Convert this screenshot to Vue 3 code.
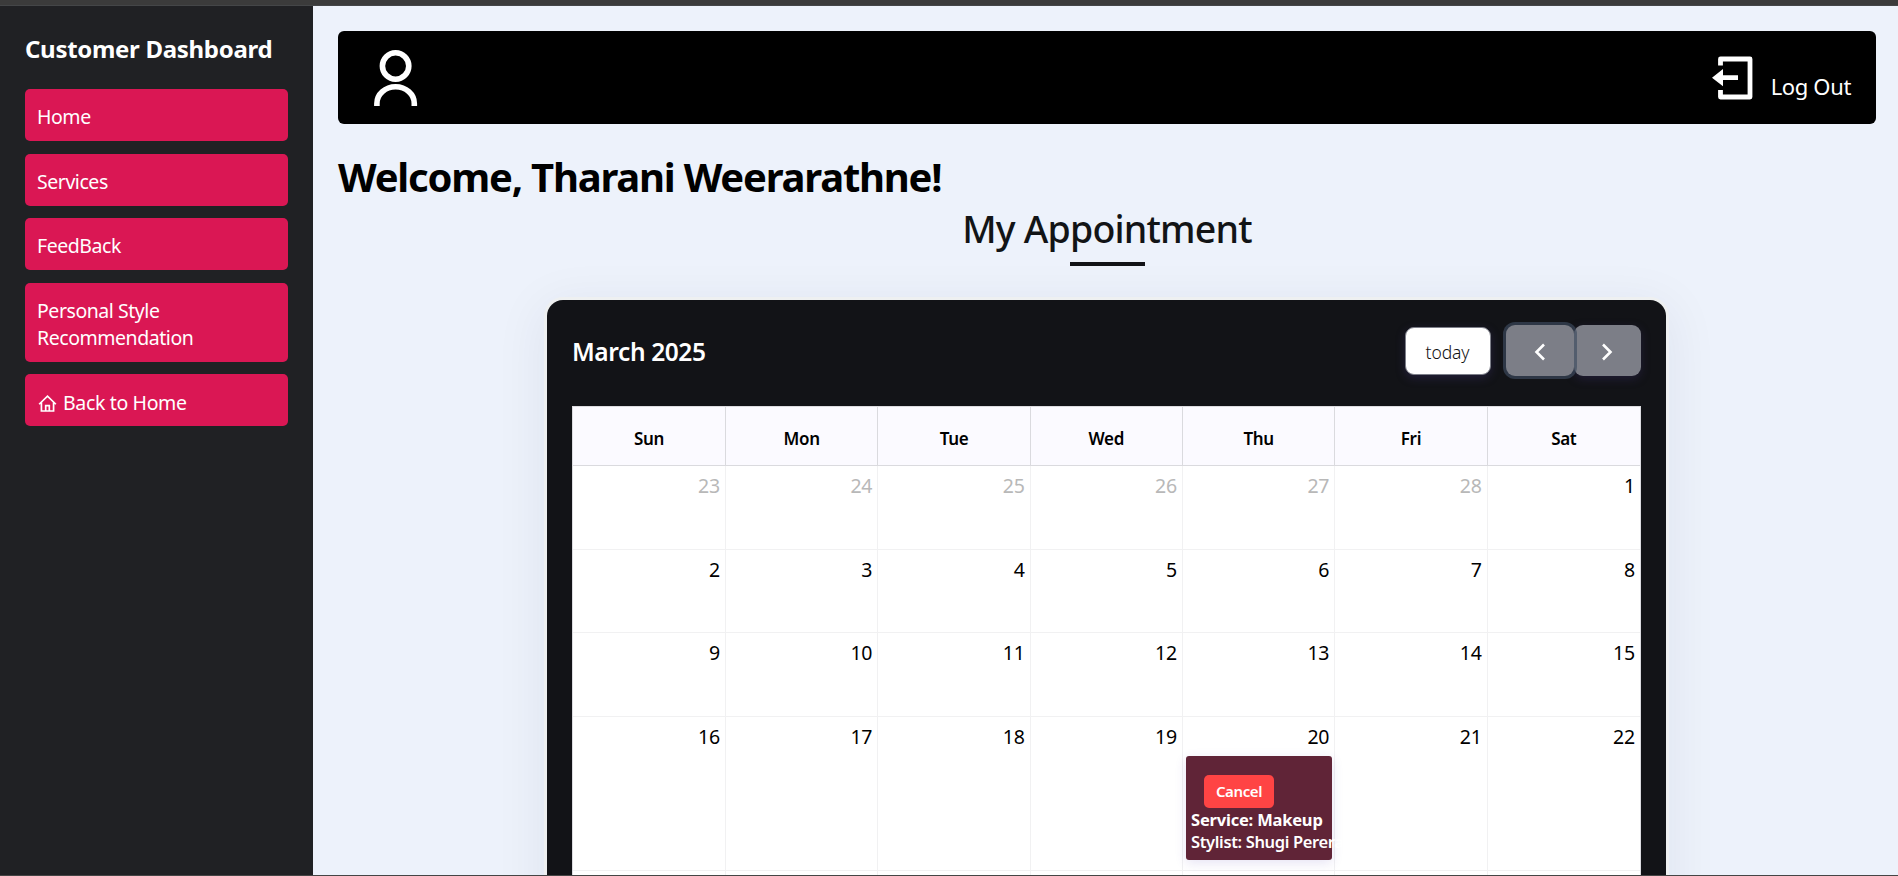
<script setup>
const navItems = ['Home', 'Services', 'FeedBack', 'Personal Style Recommendation']
const days = ['Sun', 'Mon', 'Tue', 'Wed', 'Thu', 'Fri', 'Sat']
const weeks = [
  [23, 24, 25, 26, 27, 28, 1],
  [2, 3, 4, 5, 6, 7, 8],
  [9, 10, 11, 12, 13, 14, 15],
  [16, 17, 18, 19, 20, 21, 22],
]
</script>

<template>
  <div class="page">
    <div class="topline"></div>
    <div class="layout">
      <aside class="sidebar">
        <h2>Customer Dashboard</h2>
        <nav>
          <a v-for="item in navItems" :key="item"><span>{{ item }}</span></a>
          <a>
            <svg class="home" viewBox="0 0 20 20" width="19" height="19">
              <path d="M1.200 10.800 10 2.200l8.800 8.600M3.600 8.900v9h12.800v-9M8.100 17.500v-5.200h3.800v5.200" fill="none" stroke="#fff" stroke-width="1.800" />
            </svg>
            <span>Back to Home</span>
          </a>
        </nav>
      </aside>
      <main>
        <header>
          <svg class="user" viewBox="0 0 44 57" width="44" height="57">
            <g fill="none" stroke="#fff" stroke-width="5.600">
              <ellipse cx="21.600" cy="16" rx="13.200" ry="13.200" />
              <path d="M2.900 56V53.500a18.700 16.700 0 0 1 37.400 0V56" />
            </g>
          </svg>
          <div class="logout">
            <svg viewBox="0 0 42 44" width="42" height="44">
              <path d="M8.500 9.500V3H38V41H8.500V34" fill="none" stroke="#fff" stroke-width="4.800" stroke-linejoin="round" />
              <path d="M0 21.700 11 13v6.200h15v4.800H11v6.200z" fill="#fff" />
            </svg>
            <span>Log Out</span>
          </div>
        </header>
        <h1>Welcome, Tharani Weerarathne!</h1>
        <h3><span>My Appointment</span></h3>
        <div class="rule"></div>
        <section class="card">
          <div class="toolbar">
            <div class="month">March 2025</div>
            <button class="today">today</button>
            <div class="group">
              <button class="prev"><svg viewBox="0 0 12 18" width="12" height="18"><path d="M10 1.500 2.500 9l7.500 7.500" /></svg></button>
              <button class="next"><svg viewBox="0 0 12 18" width="12" height="18"><path d="m2 1.500 7.500 7.500L2 16.500" /></svg></button>
            </div>
          </div>
          <div class="calendar">
            <div class="row head">
              <div v-for="d in days" :key="d" class="cell"><span>{{ d }}</span></div>
            </div>
            <div v-for="(week, w) in weeks" :key="w" class="row" :class="{ tall: w === 3 }">
              <div v-for="(n, i) in week" :key="i" class="cell">
                <div class="num" :class="{ muted: w === 0 && n > 20 }">{{ n }}</div>
                <div v-if="w === 3 && n === 20" class="event">
                  <button>Cancel</button>
                  <div class="service">Service: Makeup</div>
                  <div class="stylist">Stylist: Shugi Perera</div>
                </div>
              </div>
            </div>
            <div class="row">
              <div v-for="d in days" :key="d" class="cell"></div>
            </div>
          </div>
        </section>
      </main>
    </div>
    <div class="bottomline"></div>
  </div>
</template>

<style>
html, body { margin: 0; overflow: hidden; }
</style>

<style scoped>
* { box-sizing: border-box; }
.page {
  height: 876px;
  display: flex;
  flex-direction: column;
  overflow: hidden;
  font-family: "Noto Sans", "Open Sans", sans-serif;
  background: #edf2fb;
}
.topline { flex: 0 0 6px; background: #3b3b3b; border-bottom: 1px solid #444648; }
.bottomline { flex: 0 0 1px; background: #454545; position: relative; }
.layout { flex: 1; min-height: 0; display: flex; }
.sidebar { flex: 0 0 313px; background: #202124; padding: 25px; color: #fff; }
h1, h2, h3 { margin: 0; white-space: nowrap; flex: none; }
.sidebar h2 { font-size: 24px; line-height: 36px; height: 58px; font-weight: 700; letter-spacing: -0.3px; }
nav { display: flex; flex-direction: column; gap: 12.600px; }
nav a {
  display: flex;
  align-items: center;
  gap: 6px;
  min-height: 52px;
  padding: 14px 13px 11px 12px;
  border-radius: 5px;
  background: #da1754;
  font-size: 19.500px;
  line-height: 27px;
  letter-spacing: -0.45px;
}
.home { flex: none; margin: 1px 0 0 1px; }
nav a:last-child { letter-spacing: -0.35px; padding-top: 15px; padding-bottom: 10px; }
main { flex: 1; min-width: 0; padding: 25px 22px 0 25px; display: flex; flex-direction: column; }
header {
  flex: 0 0 93px;
  display: flex;
  justify-content: space-between;
  align-items: flex-start;
  background: #000;
  border-radius: 6px;
  padding: 19px 25px 0 36px;
}
.logout { display: flex; gap: 17px; padding-top: 6px; color: #fff; font-size: 22px; line-height: 30px; letter-spacing: -0.35px; }
.logout span { margin-top: 15px; }
h1 { margin-top: 23px; font-size: 40px; line-height: 60px; font-weight: 700; color: #000; letter-spacing: -1.22px; }
h3 { height: 55px; text-align: center; font-size: 37.500px; line-height: 43px; font-weight: 500; color: #121416; letter-spacing: -0.8px; }
.rule { align-self: center; flex: 0 0 4px; width: 75px; background: #121317; }
.card {
  align-self: center;
  flex: 0 0 700px;
  width: 1119px;
  margin-top: 34px;
  margin-right: 1px;
  padding: 0 25px;
  background: #121317;
  border-radius: 16px;
  box-shadow: 0 0 0 3px #eef0f1, 0 10px 50px 8px rgba(20, 40, 70, 0.06);
}
.toolbar { height: 106px; display: flex; align-items: flex-start; padding-top: 25px; }
.month { flex: 1; font-size: 24.500px; line-height: 54px; font-weight: 600; color: #fff; letter-spacing: -0.4px; }
button { border: 0; padding: 0; font-family: inherit; }
.today {
  margin-top: 2px;
  width: 86px;
  height: 48px;
  border: 1px solid #7c7e88;
  border-radius: 9px;
  background: #fff;
  color: #111;
  font-size: 17.500px;
  padding-top: 1px;
  font-weight: 300;
  letter-spacing: -0.1px;
  box-shadow: 0 3px 10px rgba(60, 50, 110, 0.4);
}
.group { display: flex; margin-left: 15px; }
.group button { width: 67.500px; height: 51px; border-radius: 9px; background: #7c7e87; box-shadow: 0 3px 10px rgba(60, 50, 110, 0.35); }
.group .prev { position: relative; z-index: 1; width: 68px; box-shadow: 0 0 0 3px rgba(62, 76, 96, 0.650); }
.group svg { display: block; margin: 3px auto 0; fill: none; stroke: #fff; stroke-width: 2.600; }
.calendar { background: #fff; border: 1px solid #dcdce0; border-bottom: 0; }
.row { display: grid; grid-template-columns: 153px repeat(6, 1fr); grid-template-rows: 100%; height: 83.700px; }
.row.tall { height: 154px; }
.cell { min-width: 0; border-right: 1px solid #f1f1f2; border-bottom: 1px solid #f1f1f2; }
.cell:last-child { border-right: 0; }
.row.head { height: 59px; background: #fbfaff; }
.head .cell { border-color: #dadade; text-align: center; font-size: 17px; line-height: 63px; font-weight: 600; color: #000; letter-spacing: -0.3px; }
.num { height: 39px; padding: 4px 5px 0 0; text-align: right; font-size: 19.500px; line-height: 32px; color: #000; letter-spacing: -0.2px; }
.muted { color: #b8b8b8; }
.event {
  margin: 0 2px 0 3px;
  height: 104px;
  padding: 19px 6px 0 5px;
  border-radius: 3px;
  background: #602437;
  color: #fff;
  white-space: nowrap;
  box-shadow: 0 3px 12px rgba(80, 60, 180, 0.14);
  font-size: 16.500px;
  line-height: 22px;
}
.event button { display: block; margin: 0 0 1px 13px; width: 70px; height: 33px; padding-bottom: 2px; border-radius: 5px; background: #ff4444; color: #fff; font-size: 15px; font-weight: 600; letter-spacing: -0.4px; }
.service { font-weight: 700; letter-spacing: -0.2px; }
.stylist { font-weight: 600; letter-spacing: -0.35px; }
</style>
